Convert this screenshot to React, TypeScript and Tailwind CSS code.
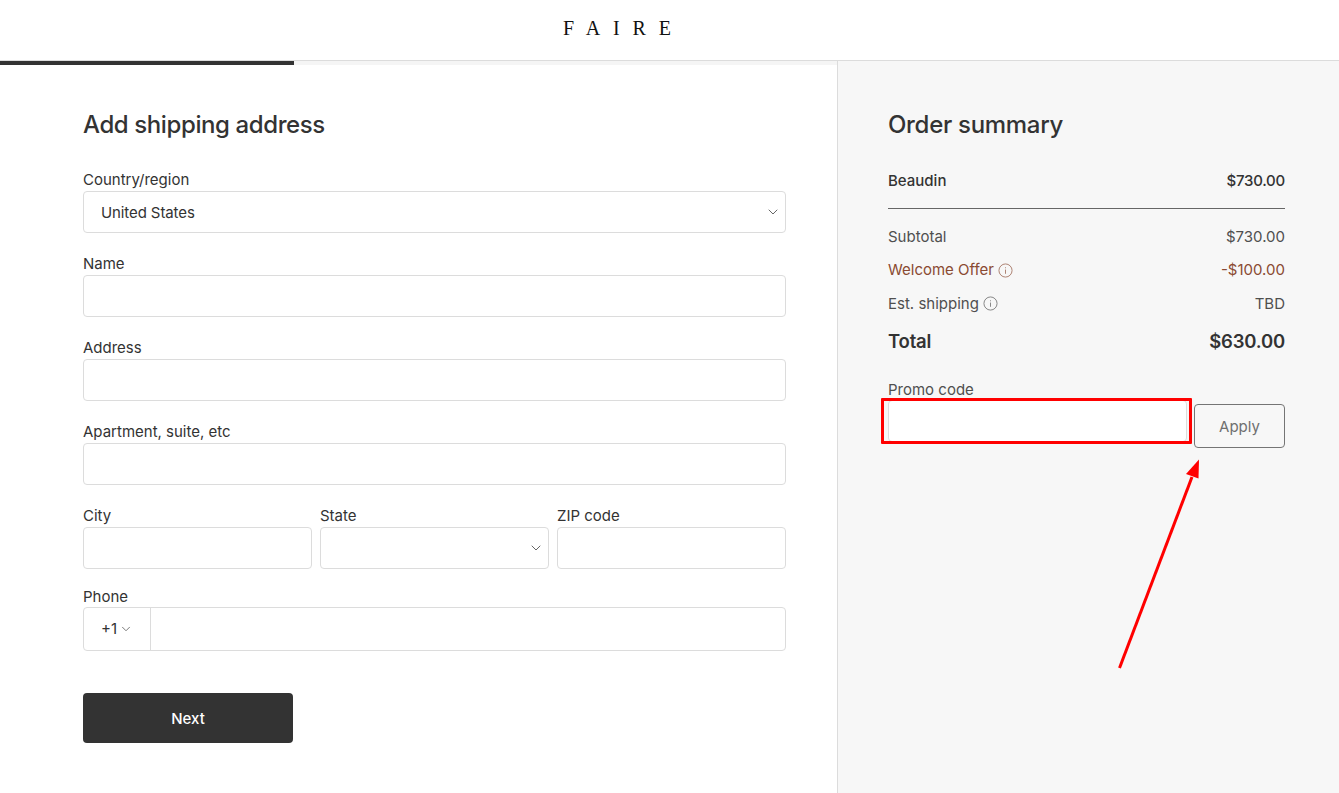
import { ChevronDown } from "lucide-react";

const FONT = "font-['Inter','Liberation_Sans',sans-serif]";

function Label({ children }: { children: string }) {
  return <div className="h-[21px] text-[15px] leading-[21px] text-[#333333]">{children}</div>;
}

function Field({ label, chevron, value, className }: { label: string; chevron?: boolean; value?: string; className?: string }) {
  return (
    <div className={className}>
      <Label>{label}</Label>
      <div className="mt-px flex h-[42px] items-center justify-between rounded-[4px] border border-[#dcdcdc] bg-white pl-[17px] pr-[4px]">
        <span className="pt-[2px] text-[15px] tracking-[-0.1px] text-[#333333]">{value}</span>
        {chevron && <ChevronDown className="h-[16px] w-[16px] text-[#666666]" strokeWidth={1.5} />}
      </div>
    </div>
  );
}

function InfoIcon({ color }: { color: string }) {
  return (
    <svg className="ml-[4px] h-[15px] w-[15px] opacity-70" viewBox="0 0 16 16" fill="none" stroke={color} strokeWidth={1}>
      <circle cx="8" cy="8" r="7" />
      <path d="M8 7v4.5M8 4.6v1" />
    </svg>
  );
}

function SummaryRow({ left, right, info, color }: { left: string; right: string; info?: boolean; color: string }) {
  return (
    <div className="flex h-[33.5px] items-center justify-between text-[15px]" style={{ color }}>
      <span className="flex items-center">
        {left}
        {info && <InfoIcon color={color} />}
      </span>
      <span>{right}</span>
    </div>
  );
}

export default function App() {
  return (
    <div className={`relative flex h-[793px] flex-col overflow-hidden bg-white ${FONT}`}>
      <header className="flex h-[61px] shrink-0 items-center justify-center border-b border-[#dcdcdc] pb-[4px] pr-[92px]">
        <span className="font-['Liberation_Serif',serif] text-[20px] leading-none tracking-[12.9px] text-[#111111]">FAIRE</span>
      </header>

      <div className="flex min-h-0 flex-1">
        <main className="w-[838px] shrink-0 border-r border-[#dcdcdc]">
          <div className="h-[4px] bg-[#f5f5f5]">
            <div className="h-[4px] w-[294px] bg-[#333333]" />
          </div>
          <div className="pl-[83px] pr-[51px] pt-[41px]">
            <h1 className="h-[37px] text-[24px] font-medium leading-[37px] tracking-[-0.4px] text-[#333333]">Add shipping address</h1>
            <div className="mt-[26px] flex flex-col gap-[20px]">
              <Field label="Country/region" value="United States" chevron />
              <Field label="Name" />
              <Field label="Address" />
              <Field label="Apartment, suite, etc" />
              <div className="grid grid-cols-3 gap-[8px]">
                <Field label="City" />
                <Field label="State" chevron />
                <Field label="ZIP code" />
              </div>
            </div>
            <div className="mt-[17px]">
              <Label>Phone</Label>
              <div className="flex h-[44px] rounded-[4px] border border-[#dcdcdc] bg-white">
                <div className="flex w-[67px] items-center justify-center gap-[2px] border-r border-[#dcdcdc] text-[15px] text-[#333333]">
                  +1
                  <ChevronDown className="h-[14px] w-[14px] text-[#666666]" strokeWidth={1.5} />
                </div>
              </div>
            </div>
            <button className="mt-[42px] h-[50px] w-[210px] rounded-[4px] bg-[#333333] pt-[2px] text-[15px] font-medium text-white">Next</button>
          </div>
        </main>

        <aside className="flex-1 bg-[#f7f7f7] pl-[50px] pr-[54px] pt-[45px]">
          <h2 className="h-[37px] text-[24px] font-medium leading-[37px] tracking-[-0.3px] text-[#333333]">Order summary</h2>
          <div className="mt-[28px] flex h-[20px] items-center justify-between text-[15px] font-medium text-[#333333]">
            <span>Beaudin</span>
            <span className="tracking-[-0.25px]">$730.00</span>
          </div>
          <div className="mt-[17px] border-t border-[#666666]" />
          <div className="mt-[11px]">
            <SummaryRow left="Subtotal" right="$730.00" color="#4f4f4f" />
            <SummaryRow left="Welcome Offer" right="-$100.00" info color="#8a4a32" />
            <SummaryRow left="Est. shipping" right="TBD" info color="#4f4f4f" />
          </div>
          <div className="mt-[7px] flex h-[28px] items-center justify-between text-[18.5px] font-semibold tracking-[-0.2px] text-[#333333]">
            <span>Total</span>
            <span>$630.00</span>
          </div>
          <div className="mt-[23px]">
            <div className="h-[21px] text-[15px] leading-[21px] text-[#4f4f4f]">Promo code</div>
            <div className="flex items-start gap-[7px]">
              <div className="h-[42px] flex-1 rounded-[4px] border border-[#dcdcdc] bg-white" />
              <button className="mt-[4px] h-[44px] w-[91px] rounded-[4px] border border-[#757575] bg-[#f7f7f7] pt-[3px] text-[15px] text-[#6f6f6f]">Apply</button>
            </div>
          </div>
        </aside>
      </div>

      {/* red annotation drawn over the screenshot */}
      <div className="absolute left-[881px] top-[398px] h-[46px] w-[311px] rounded-[1px] border-[3px] border-[#ff0000]" />
      <svg className="absolute left-[1100px] top-[450px] h-[230px] w-[120px]" viewBox="0 0 120 230" fill="none">
        <path d="M19.5 218L92 27" stroke="#ff0000" strokeWidth="3" />
        <path d="M99 9.5L86 24L98.5 28.5Z" fill="#ff0000" />
      </svg>
    </div>
  );
}
